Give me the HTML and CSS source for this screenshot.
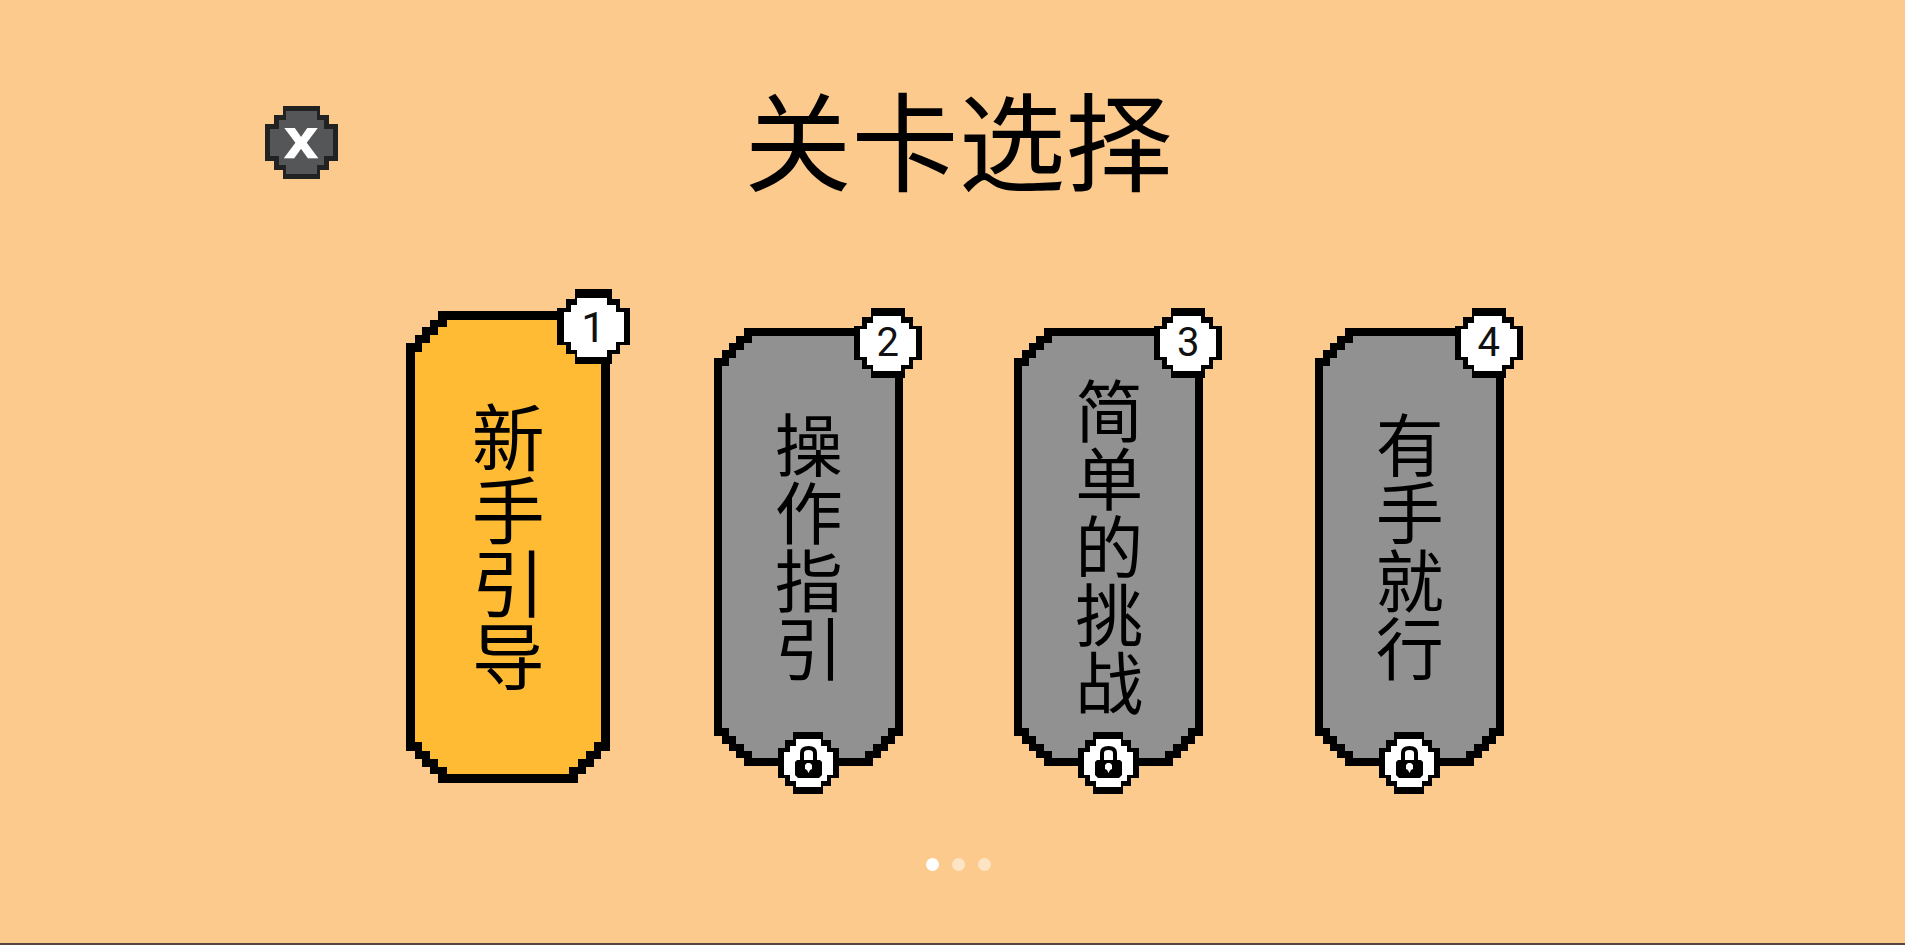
FILE: index.html
```html
<!DOCTYPE html>
<html lang="zh-CN">
<head>
    <meta charset="UTF-8">
    <meta name="viewport" content="width=device-width, initial-scale=1.0">
    <title>关卡选择</title>
    <link rel="stylesheet" href="styles.css">
</head>
<body>
    <!-- shared pixel shapes -->
    <svg class="sprites" aria-hidden="true">
        <symbol id="frame" viewBox="0 0 189 437" preserveAspectRatio="none">
            <path d="M30 0H189V407H181V415H174V422H167V429H159V437H30V429H22V422H15V415H8V407H0V30H8V22H15V15H22V8H30Z"/>
            <path fill="currentColor" d="M38 8H181V399H174V407H167V415H159V422H151V429H38V422H30V415H22V407H15V399H8V38H15V30H22V22H30V15H38Z"/>
        </symbol>
        <symbol id="badge" viewBox="0 0 68 70">
            <path d="M17 0H51V9H59V18H68V52H59V61H51V70H17V61H8V52H0V18H8V9H17Z"/>
            <path fill="#fff" d="M19 8H47V15H55V21H62V49H55V57H47V63H19V57H13V49H6V21H13V15H19Z"/>
        </symbol>
        <symbol id="lock" viewBox="0 0 61 62">
            <path d="M15 0H45V8H53V16H61V46H53V54H45V62H15V54H7V46H0V16H7V8H15Z"/>
            <path fill="#fff" d="M18 7H43V14H49V20H55V43H49V49H43V55H18V49H12V43H6V20H12V14H18Z"/>
            <path fill="none" stroke="#000" stroke-width="4" d="M24 30V21Q24 16 30.500 16Q37 16 37 21V30"/>
            <path d="M19 28H42L44 30V43L41 46H20L17 43V30Z"/>
            <path fill="#fff" d="M29 31H32L34 33V37L32 38L30.500 41L29 38L27 37V33Z"/>
        </symbol>
    </svg>

    <main class="page">
        <header class="header">
            <button class="close" type="button" aria-label="关闭">
                <svg class="close-shape" viewBox="0 0 73 73" aria-hidden="true">
                    <path fill="#222" d="M18 0H55V9H64V18H73V55H64V64H55V73H18V64H9V55H0V18H9V9H18Z"/>
                    <path fill="#555658" d="M21 5H52V14H59V23H68V50H59V59H52V68H21V59H14V50H5V23H14V14H21Z"/>
                </svg>
                <span class="close-text">x</span>
            </button>
            <h1 class="title">关卡选择</h1>
        </header>

        <ul class="levels">
            <li class="level-item">
                <button class="level active" type="button">
                    <svg class="frame"><use href="#frame"/></svg>
                    <span class="number"><svg class="shape"><use href="#badge"/></svg><span class="digit">1</span></span>
                    <span class="name">新手引导</span>
                </button>
            </li>
            <li class="level-item">
                <button class="level" type="button" disabled>
                    <svg class="frame"><use href="#frame"/></svg>
                    <span class="number"><svg class="shape"><use href="#badge"/></svg><span class="digit">2</span></span>
                    <span class="name">操作指引</span>
                    <svg class="lock"><use href="#lock"/></svg>
                </button>
            </li>
            <li class="level-item">
                <button class="level" type="button" disabled>
                    <svg class="frame"><use href="#frame"/></svg>
                    <span class="number"><svg class="shape"><use href="#badge"/></svg><span class="digit">3</span></span>
                    <span class="name">简单的挑战</span>
                    <svg class="lock"><use href="#lock"/></svg>
                </button>
            </li>
            <li class="level-item">
                <button class="level" type="button" disabled>
                    <svg class="frame"><use href="#frame"/></svg>
                    <span class="number"><svg class="shape"><use href="#badge"/></svg><span class="digit">4</span></span>
                    <span class="name">有手就行</span>
                    <svg class="lock"><use href="#lock"/></svg>
                </button>
            </li>
        </ul>

        <nav class="dots">
            <button class="dot current" type="button" aria-label="第1页"></button>
            <button class="dot" type="button" aria-label="第2页"></button>
            <button class="dot" type="button" aria-label="第3页"></button>
        </nav>
    </main>
</body>
</html>
```
FILE: styles.css
```css
* {
    box-sizing: border-box;
}
body {
    margin: 0;
    background-color: #fcca8c;
    color: #000;
    font-family: "Noto Sans CJK SC", sans-serif;
}
button {
    padding: 0;
    border: none;
    background: none;
    color: inherit;
    font-family: inherit;
    cursor: pointer;
}
.sprites {
    display: none;
}
.page {
    min-height: 100vh;
    padding: 88px 0 40px 12px;
    border-bottom: 2px solid #57463f;
}

/* header */
.header {
    display: grid;
    grid-template-columns: 1fr auto 1fr;
    align-items: center;
    width: 90%;
    max-width: 1388px;
    margin: 0 auto;
}
.close {
    position: relative;
    width: 73px;
    height: 73px;
}
.close-shape {
    position: absolute;
    inset: 0;
    shape-rendering: crispEdges;
}
.close-text {
    position: relative;
    display: block;
    padding-bottom: 6px;
    color: #fff;
    font: 700 56px/56px "DejaVu Sans", sans-serif;
}
.title {
    margin: 0;
    padding-bottom: 10px;
    font-size: 107px;
    font-weight: 400;
    line-height: 98px;
}

/* levels */
.levels {
    display: grid;
    grid-template-columns: repeat(4, 1fr);
    align-items: center;
    max-width: 1202px;
    margin: 115px auto 0;
    padding: 0;
    list-style: none;
}
.level-item {
    display: flex;
    justify-content: center;
}
.level {
    position: relative;
    display: flex;
    justify-content: center;
    align-items: center;
    width: 189px;
    height: 438px;
    color: #919191;
    font-size: 68px;
}
.level:disabled {
    cursor: default;
}
.level.active {
    width: 204px;
    height: 472px;
    color: #ffbb33;
    font-size: 73px;
}
.frame {
    position: absolute;
    inset: 0;
    width: 100%;
    height: 100%;
    shape-rendering: crispEdges;
}
.name {
    position: relative;
    color: #000;
    line-height: 1;
    writing-mode: vertical-rl;
}
.number {
    position: absolute;
    top: -20px;
    right: -19px;
    display: flex;
    justify-content: center;
    align-items: center;
    width: 68px;
    height: 70px;
    color: #111;
    font: 400 40px/40px Roboto, sans-serif;
}
.active .number {
    top: -22px;
    right: -20px;
    width: 73px;
    height: 75px;
    font-size: 43px;
}
.shape {
    position: absolute;
    inset: 0;
    width: 100%;
    height: 100%;
    shape-rendering: crispEdges;
}
.digit {
    position: relative;
}
.lock {
    position: absolute;
    bottom: -28px;
    left: 64px;
    width: 61px;
    height: 62px;
}

/* pager */
.dots {
    display: flex;
    justify-content: center;
    gap: 13px;
    margin-top: 75px;
}
.dot {
    width: 13px;
    height: 13px;
    border-radius: 50%;
    background: #fde4c4;
}
.dot.current {
    background: #fff;
}
```
